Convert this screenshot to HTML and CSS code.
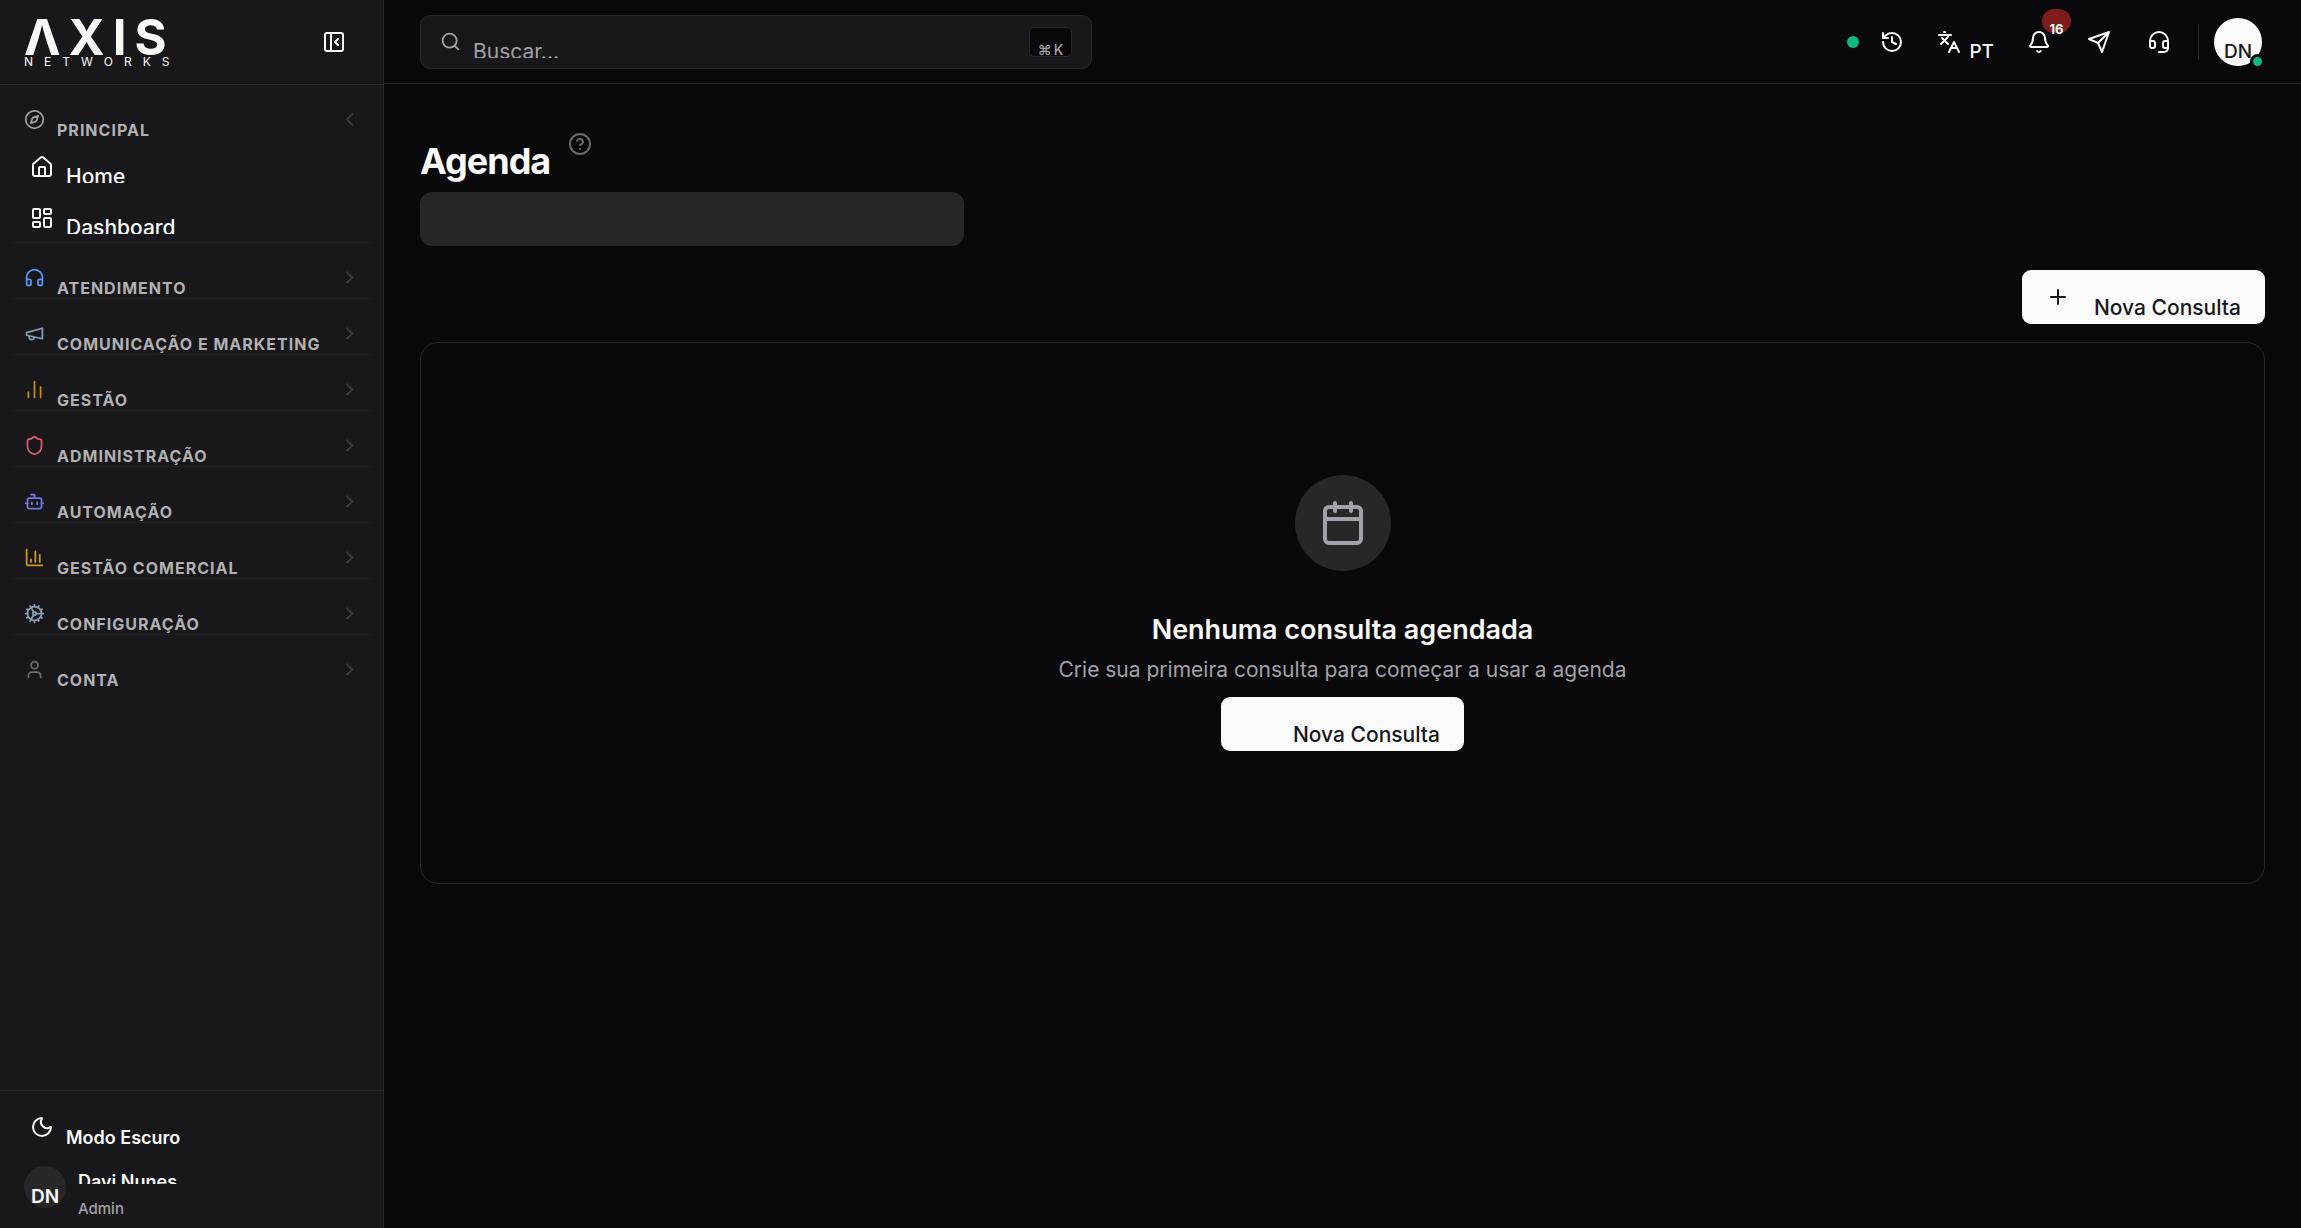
FILE: index.html
```html
<!DOCTYPE html>
<html lang="pt-BR">
<head>
<meta charset="utf-8">
<meta name="viewport" content="width=device-width, initial-scale=1">
<title>Agenda</title>
<link rel="stylesheet" href="styles.css">
</head>
<body>
<div class="app">
  <aside class="sidebar">
    <div class="brand-bar">
      <a class="brand" href="#"><span class="brand-name">ΛXIS</span><span class="brand-sub">NETWORKS</span></a>
      <button class="icon-btn" type="button" aria-label="Recolher menu">
        <svg class="icon" viewBox="0 0 24 24"><rect x="3" y="3" width="18" height="18" rx="2"/><path d="M9 3v18M16 15l-3-3 3-3"/></svg>
      </button>
    </div>
    <nav class="nav">
      <section class="group">
        <button class="group-head" type="button">
          <svg class="icon icon-sm muted" viewBox="0 0 24 24"><circle cx="12" cy="12" r="10"/><path d="m16.24 7.76-1.804 5.411a2 2 0 0 1-1.265 1.265L7.76 16.24l1.804-5.411a2 2 0 0 1 1.265-1.265z"/></svg>
          <span class="group-label">PRINCIPAL</span>
          <svg class="icon chevron" viewBox="0 0 24 24"><path d="m15 18-6-6 6-6"/></svg>
        </button>
        <a class="nav-item" href="#">
          <svg class="icon" viewBox="0 0 24 24"><path d="M15 21v-8a1 1 0 0 0-1-1h-4a1 1 0 0 0-1 1v8"/><path d="M3 10a2 2 0 0 1 .709-1.528l7-5.999a2 2 0 0 1 2.582 0l7 5.999A2 2 0 0 1 21 10v9a2 2 0 0 1-2 2H5a2 2 0 0 1-2-2z"/></svg>
          <span class="clip-label">Home</span>
        </a>
        <a class="nav-item" href="#">
          <svg class="icon" viewBox="0 0 24 24"><rect width="7" height="9" x="3" y="3" rx="1"/><rect width="7" height="5" x="14" y="3" rx="1"/><rect width="7" height="9" x="14" y="12" rx="1"/><rect width="7" height="5" x="3" y="16" rx="1"/></svg>
          <span class="clip-label">Dashboard</span>
        </a>
      </section>
      <section class="group">
        <button class="group-head" type="button">
          <svg class="icon icon-sm blue" viewBox="0 0 24 24"><path d="M3 14h3a2 2 0 0 1 2 2v3a2 2 0 0 1-2 2H5a2 2 0 0 1-2-2v-7a9 9 0 0 1 18 0v7a2 2 0 0 1-2 2h-1a2 2 0 0 1-2-2v-3a2 2 0 0 1 2-2h3"/></svg>
          <span class="group-label">ATENDIMENTO</span>
          <svg class="icon chevron" viewBox="0 0 24 24"><path d="m9 18 6-6-6-6"/></svg>
        </button>
      </section>
      <section class="group">
        <button class="group-head" type="button">
          <svg class="icon icon-sm slate" viewBox="0 0 24 24"><path d="m3 11 18-5v12L3 14v-3z"/><path d="M11.6 16.8a3 3 0 1 1-5.8-1.6"/></svg>
          <span class="group-label">COMUNICAÇÃO E MARKETING</span>
          <svg class="icon chevron" viewBox="0 0 24 24"><path d="m9 18 6-6-6-6"/></svg>
        </button>
      </section>
      <section class="group">
        <button class="group-head" type="button">
          <svg class="icon icon-sm amber" viewBox="0 0 24 24"><path d="M5 21v-6M12 21V3M19 21V9"/></svg>
          <span class="group-label">GESTÃO</span>
          <svg class="icon chevron" viewBox="0 0 24 24"><path d="m9 18 6-6-6-6"/></svg>
        </button>
      </section>
      <section class="group">
        <button class="group-head" type="button">
          <svg class="icon icon-sm rose" viewBox="0 0 24 24"><path d="M20 13c0 5-3.5 7.500-7.660 8.950a1 1 0 0 1-.67-.01C7.500 20.500 4 18 4 13V6a1 1 0 0 1 1-1c2 0 4.500-1.200 6.240-2.720a1.170 1.170 0 0 1 1.520 0C14.510 3.810 17 5 19 5a1 1 0 0 1 1 1z"/></svg>
          <span class="group-label">ADMINISTRAÇÃO</span>
          <svg class="icon chevron" viewBox="0 0 24 24"><path d="m9 18 6-6-6-6"/></svg>
        </button>
      </section>
      <section class="group">
        <button class="group-head" type="button">
          <svg class="icon icon-sm indigo" viewBox="0 0 24 24"><path d="M12 8V4H8"/><rect width="16" height="12" x="4" y="8" rx="2"/><path d="M2 14h2M20 14h2M15 13v2M9 13v2"/></svg>
          <span class="group-label">AUTOMAÇÃO</span>
          <svg class="icon chevron" viewBox="0 0 24 24"><path d="m9 18 6-6-6-6"/></svg>
        </button>
      </section>
      <section class="group">
        <button class="group-head" type="button">
          <svg class="icon icon-sm gold" viewBox="0 0 24 24"><path d="M3 3v16a2 2 0 0 0 2 2h16M18 17V9M13 17V5M8 17v-3"/></svg>
          <span class="group-label">GESTÃO COMERCIAL</span>
          <svg class="icon chevron" viewBox="0 0 24 24"><path d="m9 18 6-6-6-6"/></svg>
        </button>
      </section>
      <section class="group">
        <button class="group-head" type="button">
          <svg class="icon icon-sm slate" viewBox="0 0 24 24"><circle cx="12" cy="12" r="8"/><circle cx="12" cy="12" r="2"/><path d="M12 2v2M12 22v-2M17 20.660l-1-1.730M11 10.270 7 3.340M20.660 17l-1.730-1M3.340 7l1.730 1M14 12h8M2 12h2M20.660 7l-1.730 1M3.340 17l1.730-1M17 3.340l-1 1.730M11 13.730l-4 6.930"/></svg>
          <span class="group-label">CONFIGURAÇÃO</span>
          <svg class="icon chevron" viewBox="0 0 24 24"><path d="m9 18 6-6-6-6"/></svg>
        </button>
      </section>
      <section class="group">
        <button class="group-head" type="button">
          <svg class="icon icon-sm gray" viewBox="0 0 24 24"><path d="M19 21v-2a4 4 0 0 0-4-4H9a4 4 0 0 0-4 4v2"/><circle cx="12" cy="7" r="4"/></svg>
          <span class="group-label">CONTA</span>
          <svg class="icon chevron" viewBox="0 0 24 24"><path d="m9 18 6-6-6-6"/></svg>
        </button>
      </section>
    </nav>
    <div class="side-foot">
      <button class="nav-item theme" type="button">
        <svg class="icon" viewBox="0 0 24 24"><path d="M20.985 12.486a9 9 0 1 1-9.473-9.472c.405-.022.617.46.402.803a6 6 0 0 0 8.268 8.268c.344-.215.825-.004.803.401"/></svg>
        <span class="low-label">Modo Escuro</span>
      </button>
      <div class="user">
        <span class="user-avatar">DN</span>
        <div class="user-info">
          <span class="user-name">Davi Nunes</span>
          <span class="user-role">Admin</span>
        </div>
      </div>
    </div>
  </aside>

  <div class="page">
    <header class="topbar">
      <button class="search" type="button">
        <svg class="icon icon-sm" viewBox="0 0 24 24"><circle cx="11" cy="11" r="8"/><path d="m21 21-4.300-4.300"/></svg>
        <span class="clip-label search-label">Buscar...</span>
        <kbd class="kbd"><span>⌘</span><span>K</span></kbd>
      </button>
      <div class="tools">
        <span class="online" title="Online"></span>
        <button class="icon-btn history" type="button" aria-label="Histórico">
          <svg class="icon" viewBox="0 0 24 24"><path d="M3 12a9 9 0 1 0 9-9 9.750 9.750 0 0 0-6.740 2.740L3 8"/><path d="M3 3v5h5M12 7v5l4 2"/></svg>
        </button>
        <button class="icon-btn lang" type="button">
          <svg class="icon" viewBox="0 0 24 24"><path d="m5 8 6 6M4 14l6-6 2-3M2 5h12M7 2h1M22 22l-5-10-5 10M14 18h6"/></svg>
          <span class="low-label">PT</span>
        </button>
        <button class="icon-btn bell" type="button" aria-label="Notificações">
          <svg class="icon" viewBox="0 0 24 24"><path d="M10.268 21a2 2 0 0 0 3.464 0"/><path d="M3.262 15.326A1 1 0 0 0 4 17h16a1 1 0 0 0 .74-1.673C19.410 13.956 18 12.499 18 8A6 6 0 0 0 6 8c0 4.499-1.411 5.956-2.738 7.326"/></svg>
          <span class="badge">16</span>
        </button>
        <button class="icon-btn" type="button" aria-label="Mensagens">
          <svg class="icon" viewBox="0 0 24 24"><path d="m22 2-7 20-4-9-9-4ZM22 2 11 13"/></svg>
        </button>
        <button class="icon-btn" type="button" aria-label="Suporte">
          <svg class="icon" viewBox="0 0 24 24"><path d="M3 11h3a2 2 0 0 1 2 2v3a2 2 0 0 1-2 2H5a2 2 0 0 1-2-2v-5Zm0 0a9 9 0 1 1 18 0m0 0v5a2 2 0 0 1-2 2h-1a2 2 0 0 1-2-2v-3a2 2 0 0 1 2-2h3Z"/><path d="M21 16v2a4 4 0 0 1-4 4h-5"/></svg>
        </button>
        <span class="divider"></span>
        <button class="avatar" type="button"><span class="low-label">DN</span><span class="status"></span></button>
      </div>
    </header>

    <main class="content">
      <div class="title-row">
        <h1 class="title">Agenda</h1>
        <button class="icon-btn help" type="button" aria-label="Ajuda">
          <svg class="icon" viewBox="0 0 24 24"><circle cx="12" cy="12" r="10"/><path d="M9.090 9a3 3 0 0 1 5.830 1c0 2-3 3-3 3M12 17h.01"/></svg>
        </button>
      </div>
      <div class="skeleton"></div>
      <button class="primary" type="button">
        <svg class="icon" viewBox="0 0 24 24"><path d="M5 12h14M12 5v14"/></svg>
        <span class="low-label">Nova Consulta</span>
      </button>
      <section class="empty">
        <div class="empty-icon">
          <svg class="icon icon-xl" viewBox="0 0 24 24"><path d="M8 2v4M16 2v4"/><rect width="18" height="18" x="3" y="4" rx="2"/><path d="M3 10h18"/></svg>
        </div>
        <h2 class="empty-title">Nenhuma consulta agendada</h2>
        <p class="empty-text">Crie sua primeira consulta para começar a usar a agenda</p>
        <button class="primary primary-plain" type="button"><span class="low-label">Nova Consulta</span></button>
      </section>
    </main>
  </div>
</div>
</body>
</html>
```
FILE: styles.css
```css
* { box-sizing: border-box; }

body {
  margin: 0;
  background: #09090b;
  color: #fafafa;
  font-family: Inter, "Liberation Sans", "DejaVu Sans", sans-serif;
  font-size: 19px;
  font-weight: 500;
}

button {
  margin: 0;
  padding: 0;
  border: 0;
  background: none;
  color: inherit;
  font: inherit;
  text-align: left;
  cursor: pointer;
}

a { color: inherit; text-decoration: none; }

.app { display: flex; min-height: 100vh; }

.icon {
  display: block;
  flex: none;
  width: 24px;
  height: 24px;
  fill: none;
  stroke: currentColor;
  stroke-width: 2;
  stroke-linecap: round;
  stroke-linejoin: round;
}
.icon-sm { width: 21px; height: 21px; }
.icon-xl { width: 48px; height: 48px; }

.icon-btn { display: flex; align-items: center; flex: none; }

/* Labels sit below the centre line of their icon */
.low-label { padding-top: 21px; line-height: 24px; }
.clip-label { height: 32px; padding-top: 10px; line-height: 32px; overflow: hidden; }

/* Sidebar */
.sidebar {
  display: flex;
  flex-direction: column;
  flex: none;
  width: 384px;
  background: #18181b;
  border-right: 1px solid #27272a;
}
.brand-bar {
  display: flex;
  align-items: center;
  justify-content: space-between;
  height: 85px;
  padding: 0 37px 0 24px;
  border-bottom: 1px solid #27272a;
}
.brand { display: flex; flex-direction: column; color: #f8f8f6; }
.brand-name { font-size: 49px; font-weight: 700; line-height: 40px; letter-spacing: 8px; }
.brand-sub { font-size: 12px; font-weight: 400; line-height: 8px; letter-spacing: 11px; }

.nav { flex: 1; padding: 0 12px; }
.group { padding-top: 13px; border-bottom: 1px solid #1f1f22; }
.group:last-child { border-bottom: 0; }
.group-head {
  display: flex;
  align-items: center;
  gap: 12px;
  width: 100%;
  height: 42px;
  padding: 0 11px 0 12px;
}
.group-label {
  flex: 1;
  padding-top: 21px;
  color: #b1b1b3;
  font-size: 16px;
  font-weight: 700;
  line-height: 20px;
  letter-spacing: 1px;
  white-space: nowrap;
}
.chevron { width: 21px; height: 21px; color: #434346; }
.muted { color: #a1a1a3; }
.gray { color: #6b6b70; }
.blue { color: #539bf5; }
.slate { color: #8b9bb4; }
.amber { color: #c08d1b; }
.gold { color: #d09a17; }
.rose { color: #d85b6c; }
.indigo { color: #7477dd; }

.nav-item {
  display: flex;
  align-items: center;
  gap: 12px;
  width: 100%;
  height: 48px;
  margin-top: 3px;
  padding: 0 18px;
}
.nav-item .clip-label { font-size: 21px; }

.side-foot { padding: 9px 12px 12px; border-top: 1px solid #27272a; }
.nav-item.theme { font-size: 18px; font-weight: 600; }
.user { display: flex; align-items: flex-start; gap: 12px; margin-top: 15px; padding: 0 12px; height: 50px; }
.user-avatar {
  width: 42px;
  height: 42px;
  padding-top: 10px;
  border-radius: 50%;
  background: #27272a;
  font-weight: 600;
  line-height: 42px;
  text-align: center;
}
.user-info { display: flex; flex-direction: column; gap: 13px; }
.user-name { height: 18px; padding-top: 4px; overflow: hidden; font-size: 18px; font-weight: 600; line-height: 24px; }
.user-role { color: #a1a1aa; font-size: 15px; line-height: 24px; }

/* Top bar */
.page { flex: 1; min-width: 0; }
.topbar {
  display: flex;
  align-items: center;
  justify-content: space-between;
  height: 84px;
  padding: 0 39px 0 36px;
  border-bottom: 1px solid #27272a;
}
.search {
  display: flex;
  align-items: center;
  gap: 12px;
  width: 672px;
  height: 54px;
  padding: 0 19px;
  border: 1px solid #27272a;
  border-radius: 10px;
  background: #18181b;
  color: #a1a1aa;
}
.search-label { flex: 1; font-size: 21px; font-weight: 400; }
.kbd {
  display: flex;
  justify-content: center;
  gap: 2px;
  width: 43px;
  height: 30px;
  padding-top: 8px;
  overflow: hidden;
  border: 1px solid #27272a;
  border-radius: 5px;
  background: #09090b;
  font-family: inherit;
  font-size: 14px;
  font-weight: 500;
  line-height: 28px;
}

.tools { display: flex; align-items: center; gap: 36px; }
.online { width: 12px; height: 12px; border-radius: 50%; background: #10b981; }
.history { margin-left: -15px; }
.lang { gap: 8px; margin-left: -3px; }
.bell { position: relative; margin-left: -3px; }
.badge {
  position: absolute;
  top: -21px;
  left: 15px;
  width: 29px;
  height: 24px;
  padding-top: 9px;
  border-radius: 12px;
  background: #7f1d1d;
  font-size: 13px;
  font-weight: 700;
  line-height: 22px;
  text-align: center;
}
.divider { width: 1px; height: 36px; margin-left: -9px; background: #27272a; }
.avatar {
  position: relative;
  display: flex;
  align-items: center;
  justify-content: center;
  width: 48px;
  height: 48px;
  margin-left: -21px;
  border-radius: 50%;
  background: #fafafa;
  color: #18181b;
}
.status {
  position: absolute;
  right: -3px;
  bottom: -3px;
  width: 15px;
  height: 15px;
  border: 3px solid #09090b;
  border-radius: 50%;
  background: #10b981;
}

/* Content */
.content { display: flex; flex-direction: column; align-items: flex-start; padding: 48px 36px; }
.title-row { display: flex; align-items: flex-start; gap: 18px; height: 60px; }
.title { margin: 0; padding-top: 5px; font-size: 36px; font-weight: 700; line-height: 48px; letter-spacing: -1px; }
.help { color: #68686f; }
.skeleton { width: 544px; max-width: 100%; height: 54px; border-radius: 12px; background: #27272a; }
.primary {
  display: flex;
  align-items: center;
  justify-content: space-between;
  align-self: flex-end;
  width: 243px;
  height: 54px;
  margin-top: 24px;
  padding: 0 24px;
  border-radius: 9px;
  background: #fafafa;
  color: #18181b;
  font-size: 21px;
}
.primary-plain { align-self: center; justify-content: flex-end; margin-top: 11px; }

.empty {
  display: flex;
  flex-direction: column;
  align-items: center;
  width: 100%;
  margin-top: 18px;
  padding: 132px 36px;
  border: 1px solid #27272a;
  border-radius: 18px;
}
.empty-icon {
  display: flex;
  align-items: center;
  justify-content: center;
  width: 96px;
  height: 96px;
  border-radius: 50%;
  background: #27272a;
  color: #a1a1aa;
}
.empty-title { margin: 41px 0 0; font-size: 27px; font-weight: 600; line-height: 36px; }
.empty-text { margin: 6px 0 0; color: #a1a1aa; font-size: 21px; font-weight: 400; line-height: 32px; }
```
